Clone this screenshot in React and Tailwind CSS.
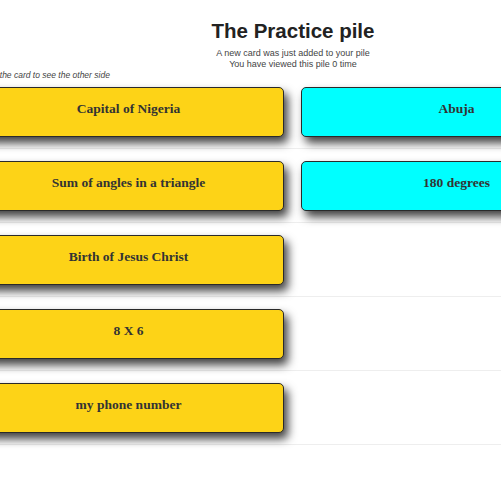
const cards = [
  { front: "Capital of Nigeria", back: "Abuja" },
  { front: "Sum of angles in a triangle", back: "180 degrees" },
  { front: "Birth of Jesus Christ" },
  { front: "8 X 6" },
  { front: "my phone number" },
];

function Card({ text, color }) {
  return (
    <div
      className={`h-[50px] w-[311px] shrink-0 rounded-[5px] border-[1.5px] border-[#2a2a2a] pt-[11px] text-center text-[13.5px] font-bold text-[#333] shadow-[4px_6px_10px_rgba(0,0,0,0.75)] ${color}`}
      style={{ fontFamily: '"Liberation Serif", "DejaVu Serif", serif' }}
    >
      {text}
    </div>
  );
}

export default function App() {
  return (
    <div className="min-h-screen w-full overflow-hidden bg-white">
      <div className="-ml-[27px] w-[640px] pt-[17px]" style={{ fontFamily: '"Liberation Sans", Arial, sans-serif' }}>
        <h1 className="text-center text-[20.5px] font-semibold leading-[28px] text-[#222]">The Practice pile</h1>
        <div className="mt-[3px] text-center text-[9px] leading-[11px] text-[#444]">
          <p>A new card was just added to your pile</p>
          <p>You have viewed this pile 0 time</p>
        </div>
        <p className="pl-[6px] text-[8.5px] italic leading-[11px] text-[#444]">Click the card to see the other side</p>

        <div>
          {cards.map((c) => (
            <div key={c.front} className="flex gap-[17px] border-b border-[#eeeeee] pt-[12px] pb-[11px] first:pt-[6px]">
              <Card text={c.front} color="bg-[#fdd317]" />
              {c.back && <Card text={c.back} color="bg-[#00ffff]" />}
            </div>
          ))}
        </div>
      </div>
    </div>
  );
}
